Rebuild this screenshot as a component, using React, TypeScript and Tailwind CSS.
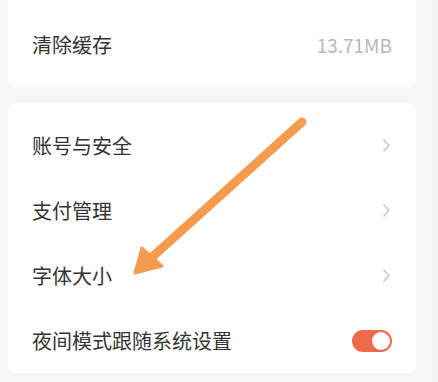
function Chevron() {
  return (
    <svg width="9" height="15" viewBox="0 0 9 15" fill="none" className="mr-[1px]">
      <path d="M2 2l5 5.5L2 13" stroke="#c9c9c9" strokeWidth="1.6" strokeLinecap="round" strokeLinejoin="round" />
    </svg>
  );
}

function Row({ label, right }: { label: string; right: React.ReactNode }) {
  return (
    <div className="h-[65px] flex items-center justify-between pl-[24px] pr-[24px]">
      <span className="text-[20px] text-[#333333]">{label}</span>
      {right}
    </div>
  );
}

export default function App() {
  return (
    <div
      className="relative w-[438px] h-[382px] overflow-hidden bg-[#f6f6f6] pr-[22px] pl-[8px]"
      style={{ fontFamily: '"Noto Sans CJK SC", "Noto Sans", sans-serif' }}
    >
      <div className="h-[87px] bg-white rounded-b-[8px] pt-[3px] flex flex-col justify-center">
        <Row label="清除缓存" right={<span className="text-[19px] text-[#b8b8b8]">13.71MB</span>} />
      </div>

      <div className="mt-[16px] bg-white rounded-[8px] pt-[10px]">
        <Row label="账号与安全" right={<Chevron />} />
        <Row label="支付管理" right={<Chevron />} />
        <Row label="字体大小" right={<Chevron />} />
        <Row
          label="夜间模式跟随系统设置"
          right={
            <div className="w-[40px] h-[22px] rounded-full bg-[#ef6a48] flex items-center justify-end pr-[2px]">
              <div className="w-[18px] h-[18px] rounded-full bg-white" />
            </div>
          }
        />
      </div>

      <div className="absolute top-0 right-0 w-[6px] h-full bg-[#f2f2f2]" />

      {/* annotation arrow */}
      <svg className="absolute left-0 top-0 pointer-events-none" width="438" height="382">
        <line x1="302" y1="122" x2="150" y2="259" stroke="#f59b50" strokeWidth="9" strokeLinecap="round" />
        <polygon points="135,273 142,248 162,266" fill="#f59b50" stroke="#f59b50" strokeWidth="3" strokeLinejoin="round" />
      </svg>
    </div>
  );
}
